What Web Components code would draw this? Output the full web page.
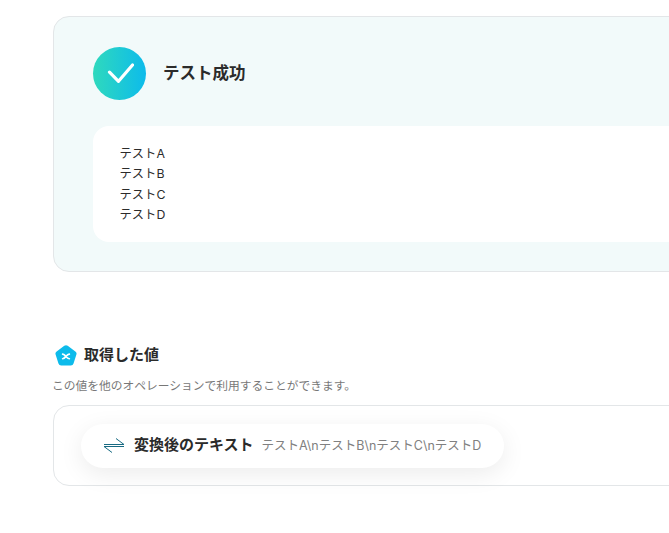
<!DOCTYPE html>
<html lang="ja">
<head>
<meta charset="utf-8">
<style>
  html, body { margin: 0; height: 100%; overflow: hidden; background: #fff; }
  body { font-family: Inter, "Noto Sans CJK JP", sans-serif; color: #2b2b2b; }
  main { display: block; padding: 16px 0 0 53px; width: 900px; }
</style>
</head>
<body>
<main>
  <test-result title="テスト成功">テストA<br>テストB<br>テストC<br>テストD</test-result>
  <value-section heading="取得した値" note="この値を他のオペレーションで利用することができます。">
    <value-chip label="変換後のテキスト">テストA\nテストB\nテストC\nテストD</value-chip>
  </value-section>
</main>

<template id="test-result-tpl">
  <style>
    :host { display: block; }
    .panel { background: #f2fafa; border: 1px solid #e3e6e8; border-radius: 16px; padding: 30px 39px 29px; height: 256px; box-sizing: border-box; }
    .head { display: flex; align-items: center; gap: 17px; height: 53px; }
    .mark { width: 53px; height: 53px; border-radius: 50%; background: linear-gradient(90deg, #2fd9bd, #0dbbeb); display: flex; align-items: center; justify-content: center; flex: none; }
    h2 { margin: 0 0 4px; font-size: 16.5px; font-weight: 700; color: #2b2b2b; }
    .body { margin-top: 26px; background: #fff; border-radius: 16px; padding: 18px 26.5px; height: 116px; box-sizing: border-box; font-size: 12.3px; line-height: 20.3px; color: #2b2b2b; }
  </style>
  <section class="panel">
    <div class="head">
      <span class="mark">
        <svg width="28" height="22" viewBox="0 0 28 22" fill="none"><path d="M3.500 9.200 12.500 18.300 26.500 2" stroke="#fff" stroke-width="3.200" stroke-linecap="round" stroke-linejoin="round"/></svg>
      </span>
      <h2></h2>
    </div>
    <div class="body"><slot></slot></div>
  </section>
</template>

<template id="value-section-tpl">
  <style>
    :host { display: block; margin: 69px 0 0 -1px; }
    .title { display: flex; align-items: center; gap: 7px; padding-left: 3px; height: 24px; }
    svg { position: relative; top: 2px; }
    h3 { margin: 0; font-size: 15px; font-weight: 700; color: #2b2b2b; }
    p { margin: 13px 0 0; font-size: 11.75px; line-height: 17px; color: #777; }
    .box { margin: 10px 0 0 1px; border: 1px solid #e3e6e8; border-radius: 16px; height: 81px; box-sizing: border-box; padding: 18px 27px; }
  </style>
  <div class="title">
    <svg width="22" height="21" viewBox="0 0 23 22">
      <path d="M9.700 .9a3 3 0 0 1 3.600 0l8 5.800a3 3 0 0 1 1.100 3.300l-3 9.300a3 3 0 0 1-2.900 2.100H6.500a3 3 0 0 1-2.900-2.100l-3-9.300a3 3 0 0 1 1.100-3.300z" fill="#0dbbeb"/>
      <path d="M8 9.500c1.600.2 2.400 1.200 3.500 2.500 1 1.200 1.900 2.200 3.500 2.400M15 9.500c-1.600.2-2.500 1.200-3.500 2.500-1.100 1.200-1.900 2.200-3.500 2.400" stroke="#fff" stroke-width="1.800" stroke-linecap="round" fill="none"/>
    </svg>
    <h3></h3>
  </div>
  <p></p>
  <div class="box"><slot></slot></div>
</template>

<template id="value-chip-tpl">
  <style>
    :host { display: inline-flex; align-items: center; height: 44px; background: #fff; border-radius: 22px; padding: 0 23px 0 22px; box-shadow: 0 6px 24px rgba(0,0,0,.08); white-space: nowrap; }
    svg { flex: none; margin-right: 9px; }
    b { font-size: 15px; font-weight: 700; color: #2b2b2b; margin: 0 8px 5px 0; }
    span { font-size: 12.500px; color: #808080; margin-bottom: 3px; }
  </style>
  <svg width="22" height="16" viewBox="0 0 22 16" fill="none" stroke="#176a82" stroke-width="1">
    <path d="M1 6.500H21L13 .5M21 8.500H1L9 14.500"/>
  </svg>
  <b></b><span><slot></slot></span>
</template>

<script>
  function shadow(el, id) {
    const root = el.attachShadow({ mode: 'open' });
    root.appendChild(document.getElementById(id).content.cloneNode(true));
    return root;
  }

  class TestResult extends HTMLElement {
    connectedCallback() {
      const root = shadow(this, 'test-result-tpl');
      root.querySelector('h2').textContent = this.getAttribute('title');
    }
  }

  class ValueSection extends HTMLElement {
    connectedCallback() {
      const root = shadow(this, 'value-section-tpl');
      root.querySelector('h3').textContent = this.getAttribute('heading');
      root.querySelector('p').textContent = this.getAttribute('note');
    }
  }

  class ValueChip extends HTMLElement {
    connectedCallback() {
      const root = shadow(this, 'value-chip-tpl');
      root.querySelector('b').textContent = this.getAttribute('label');
    }
  }

  customElements.define('test-result', TestResult);
  customElements.define('value-section', ValueSection);
  customElements.define('value-chip', ValueChip);
</script>
</body>
</html>
